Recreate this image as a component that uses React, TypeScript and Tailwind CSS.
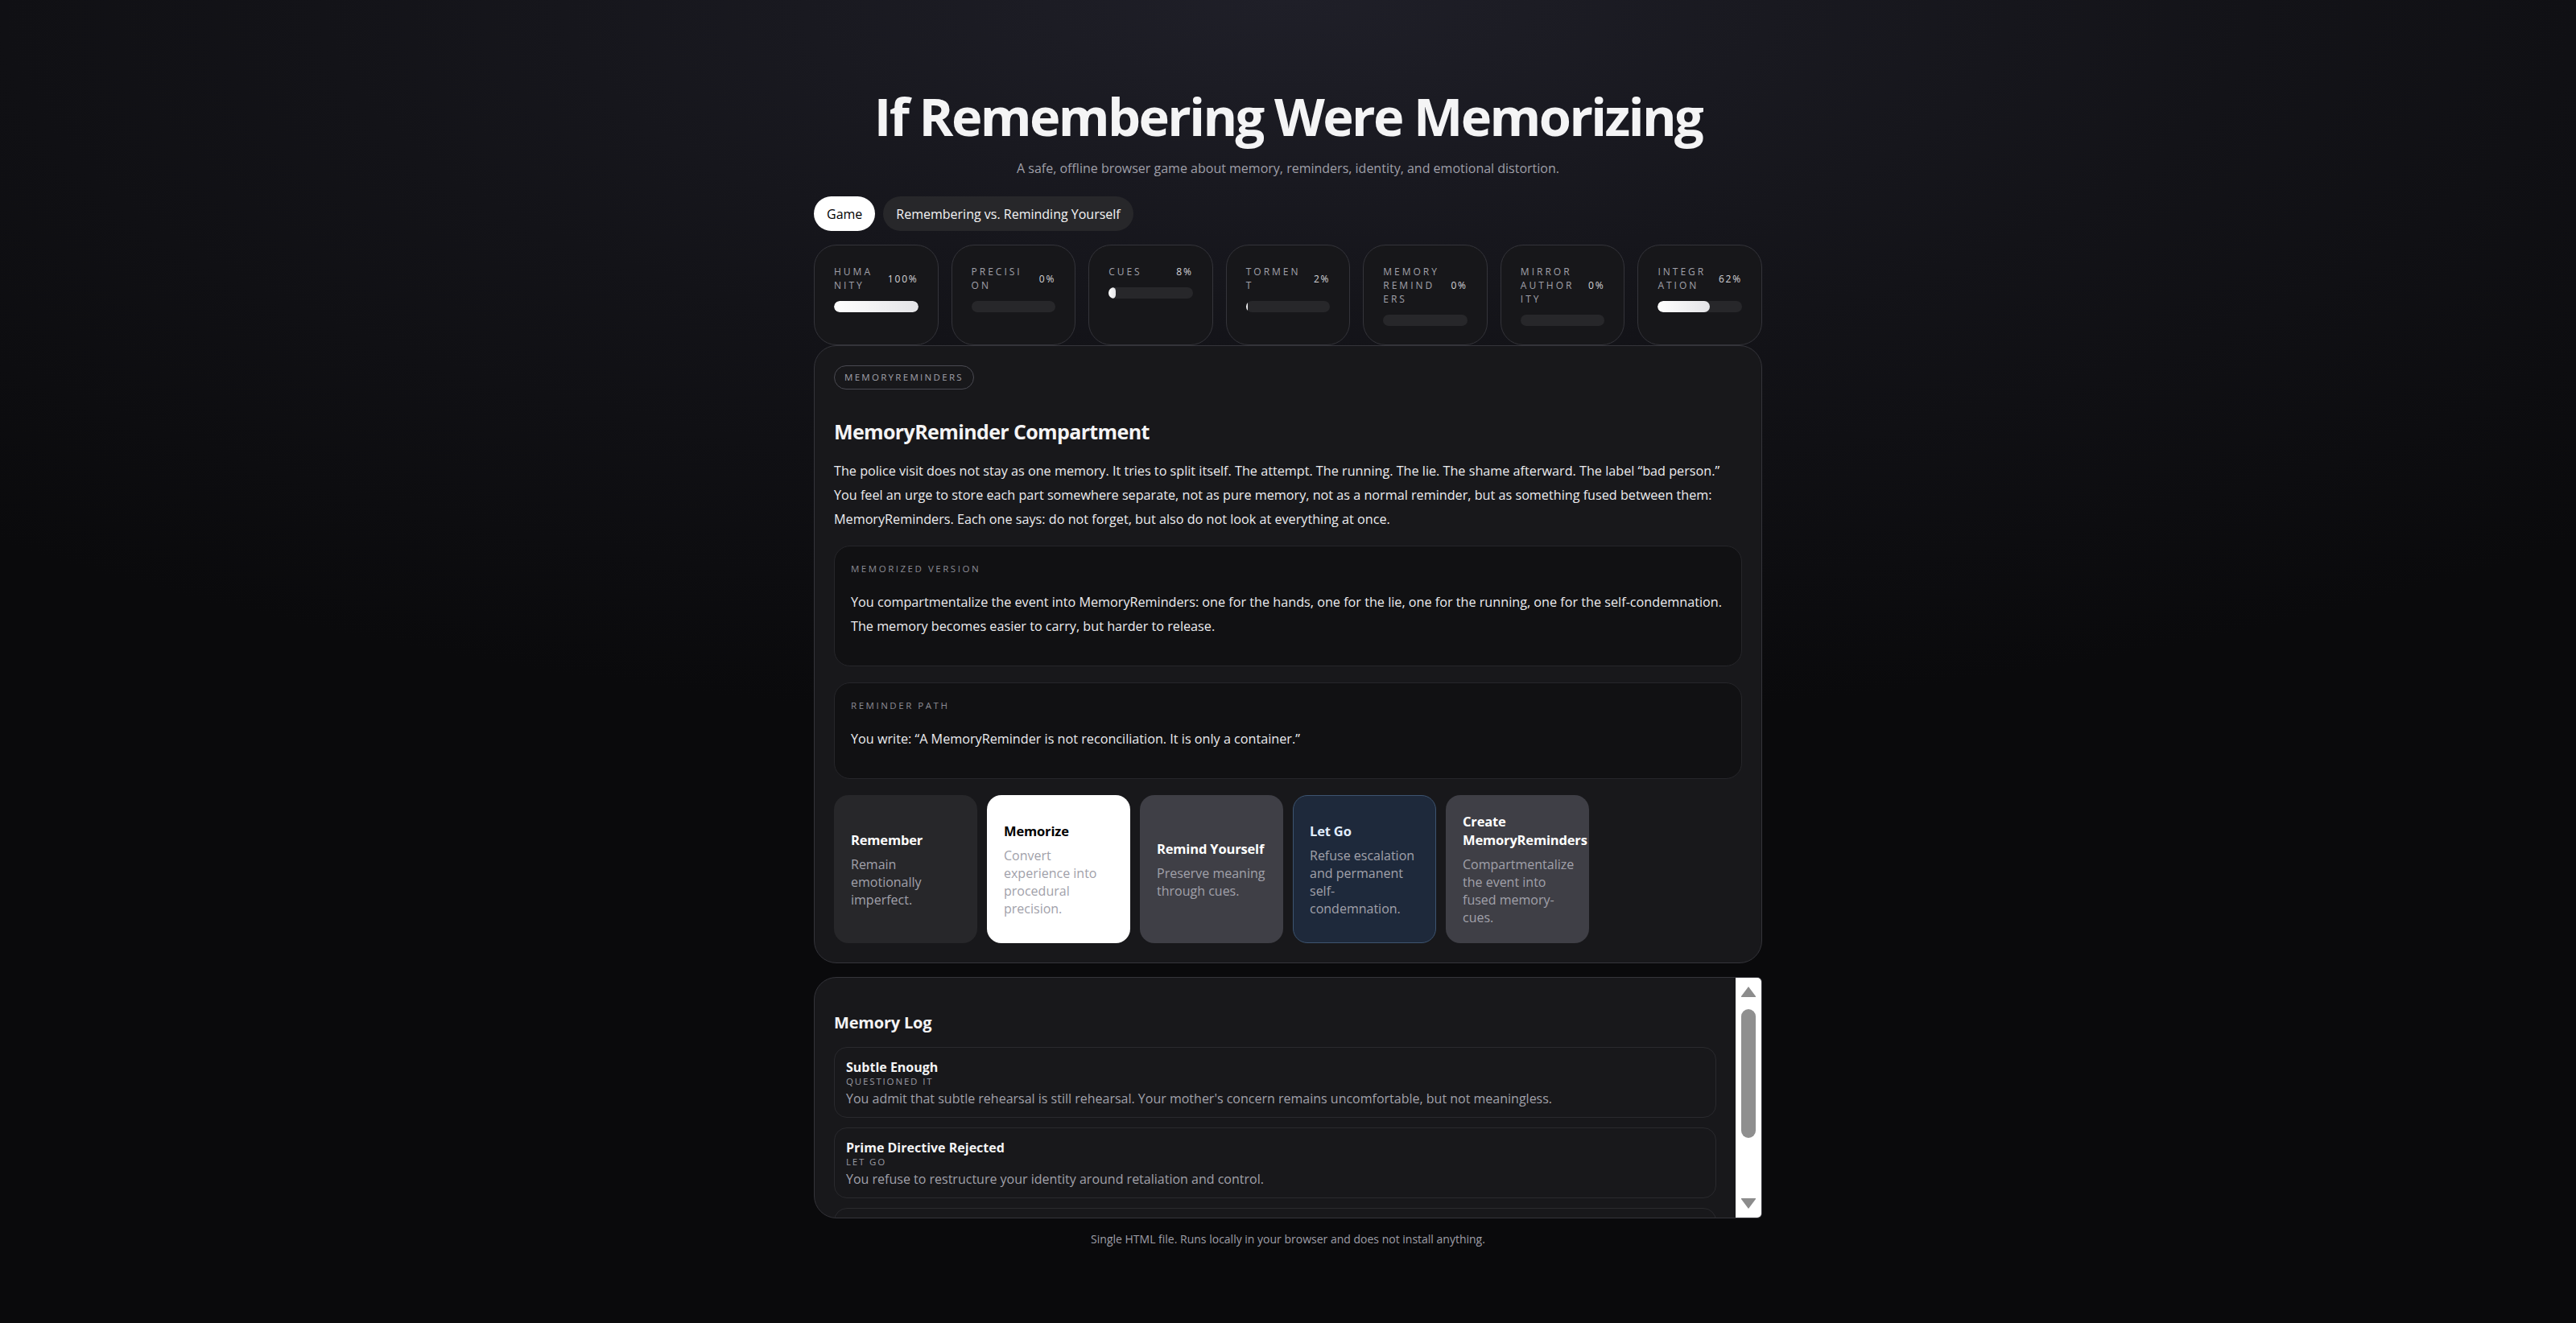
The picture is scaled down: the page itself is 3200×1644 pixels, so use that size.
import React from "react";

interface Stat {
  label: string;
  value: number;
}

const stats: Stat[] = [
  { label: "Humanity", value: 100 },
  { label: "Precision", value: 0 },
  { label: "Cues", value: 8 },
  { label: "Torment", value: 2 },
  { label: "Memory Reminders", value: 0 },
  { label: "Mirror Authority", value: 0 },
  { label: "Integration", value: 62 },
];

interface Choice {
  title: string;
  text: string;
  tone: "plain" | "active" | "muted" | "calm";
}

const choices: Choice[] = [
  { title: "Remember", text: "Remain emotionally imperfect.", tone: "plain" },
  { title: "Memorize", text: "Convert experience into procedural precision.", tone: "active" },
  { title: "Remind Yourself", text: "Preserve meaning through cues.", tone: "muted" },
  { title: "Let Go", text: "Refuse escalation and permanent self-condemnation.", tone: "calm" },
  {
    title: "Create MemoryReminders",
    text: "Compartmentalize the event into fused memory-cues.",
    tone: "muted",
  },
];

const log = [
  {
    title: "Subtle Enough",
    tag: "Questioned it",
    text: "You admit that subtle rehearsal is still rehearsal. Your mother's concern remains uncomfortable, but not meaningless.",
  },
  {
    title: "Prime Directive Rejected",
    tag: "Let go",
    text: "You refuse to restructure your identity around retaliation and control.",
  },
  {
    title: "The Police Visit",
    tag: "Remembered",
    text: "The memory arrives whole, and you let it stay imperfect.",
  },
];

const toneClass: Record<Choice["tone"], string> = {
  plain: "bg-[#27272a] border-transparent",
  active: "bg-white border-transparent",
  muted: "bg-[#3f3f46] border-transparent",
  calm: "bg-[#1e293b] border-[#3d5470]",
};

const titleClass: Record<Choice["tone"], string> = {
  plain: "text-white",
  active: "text-black",
  muted: "text-white",
  calm: "text-[#e0edff]",
};

const StatCard: React.FC<{ stat: Stat }> = ({ stat }) => (
  <div className="rounded-[28px] border border-[#34343a] bg-[#17171a] px-6 pt-6 pb-[23px]">
    <div className="flex items-center justify-between gap-3">
      <span className="min-w-0 break-all text-[12px] leading-[17px] tracking-[0.25em] text-[#a1a1aa] uppercase">
        {stat.label}
      </span>
      <span className="shrink-0 text-[12px] leading-[17px] tracking-[0.15em] text-[#d4d4d8]">
        {stat.value}%
      </span>
    </div>
    <div className="mt-[11px] h-[14px] w-full overflow-hidden rounded-full bg-[#27272a]">
      {stat.value > 0 && (
        <div
          className="h-full rounded-full bg-gradient-to-r from-white to-[#e4e4e7]"
          style={{ width: `${stat.value}%` }}
        />
      )}
    </div>
  </div>
);

const InfoBox: React.FC<{ label: string; children: React.ReactNode }> = ({ label, children }) => (
  <div className="rounded-[20px] border border-[#26262a] bg-[#111113] px-5 pt-5 pb-[18px]">
    <div className="text-[11.5px] leading-4 tracking-[0.22em] text-[#8b8b93] uppercase">{label}</div>
    <p className="mt-[18px] mb-4 text-[16.2px] leading-[30px] text-[#ececef]">{children}</p>
  </div>
);

export default function App() {
  return (
    <div
      className="min-h-screen w-full bg-[#0a0a0c] bg-[radial-gradient(ellipse_75%_55%_at_50%_0%,#1f1f28_0%,#131318_50%,#0a0a0c_100%)] pb-16 text-white"
      style={{ fontFamily: '"Open Sans", "Noto Sans", sans-serif' }}
    >
      <div className="mx-auto w-[1178px] pt-[110px]">
        <h1 className="text-center text-[65px] leading-[68px] font-bold tracking-[-0.04em] text-[#f4f4f5]">
          If Remembering Were Memorizing
        </h1>
        <p className="mt-[19px] text-center text-[16px] leading-6 text-[#9f9fa8]">
          A safe, offline browser game about memory, reminders, identity, and emotional distortion.
        </p>

        <div className="mt-[23px] flex gap-[10px]">
          <button className="h-[43px] rounded-full bg-white px-4 text-[16px] text-black">Game</button>
          <button className="h-[43px] rounded-full bg-[#27272a] px-4 text-[16px] text-[#f4f4f5]">
            Remembering vs. Reminding Yourself
          </button>
        </div>

        <div className="mt-[17px] grid grid-cols-7 gap-4">
          {stats.map((s) => (
            <StatCard key={s.label} stat={s} />
          ))}
        </div>

        <section className="rounded-[28px] border border-[#34343a] bg-[#18181b] p-6">
          <span className="inline-flex h-[30px] items-center rounded-full border border-[#4a4a52] px-3 text-[11.5px] tracking-[0.2em] text-[#a1a1aa] uppercase">
            MemoryReminders
          </span>
          <h2 className="mt-[35px] text-[25px] leading-[34px] font-bold tracking-[-0.025em] text-[#f4f4f5]">
            MemoryReminder Compartment
          </h2>
          <p className="mt-[18px] text-[16.2px] leading-[29.75px] text-[#ececef]">
            The police visit does not stay as one memory. It tries to split itself. The attempt. The running. The
            lie. The shame afterward. The label “bad person.” You feel an urge to store each part somewhere separate,
            not as pure memory, not as a normal reminder, but as something fused between them: MemoryReminders. Each
            one says: do not forget, but also do not look at everything at once.
          </p>

          <div className="mt-[18px] flex flex-col gap-5">
            <InfoBox label="Memorized version">
              You compartmentalize the event into MemoryReminders: one for the hands, one for the lie, one for the
              running, one for the self-condemnation. The memory becomes easier to carry, but harder to release.
            </InfoBox>
            <InfoBox label="Reminder path">
              You write: “A MemoryReminder is not reconciliation. It is only a container.”
            </InfoBox>
          </div>

          <div className="mt-5 grid grid-cols-6 gap-3">
            {choices.map((c) => (
              <button
                key={c.title}
                className={`flex min-h-[183px] flex-col justify-center rounded-[18px] border px-5 py-5 text-left ${toneClass[c.tone]}`}
              >
                <span className={`text-[16.5px] leading-[23px] font-bold tracking-[-0.01em] ${titleClass[c.tone]}`}>
                  {c.title}
                </span>
                <span className="mt-2 text-[16px] leading-[22px] text-[#a1a1aa]">{c.text}</span>
              </button>
            ))}
          </div>
        </section>

        <section className="mt-[17px] flex h-[300px] overflow-hidden rounded-l-[28px] rounded-r-[6px] border border-[#34343a] bg-[#18181b]">
          <div className="min-w-0 flex-1 overflow-hidden px-6 pt-[42px]">
            <h3 className="text-[20px] leading-7 font-bold tracking-[-0.01em] text-[#f4f4f5]">Memory Log</h3>
            <div className="mt-4 flex flex-col gap-3">
              {log.map((e) => (
                <div key={e.title} className="rounded-[16px] border border-[#2a2a2e] bg-[#18181b] px-[14px] pt-[14px] pb-3">
                  <div className="text-[16px] leading-5 font-bold text-[#f4f4f5]">{e.title}</div>
                  <div className="text-[11.5px] leading-4 tracking-[0.16em] text-[#9a9aa2] uppercase">{e.tag}</div>
                  <div className="mt-[2px] text-[16px] leading-[22px] text-[#a1a1aa]">{e.text}</div>
                </div>
              ))}
            </div>
          </div>
          <div className="flex w-[32px] shrink-0 flex-col items-center bg-white py-[10px]">
            <svg width="20" height="15" viewBox="0 0 20 15">
              <path d="M10 1 L19 13 Q19.5 14 18.5 14 L1.5 14 Q0.5 14 1 13 Z" fill="#8c8c8c" />
            </svg>
            <div className="mt-[14px] h-[160px] w-[18px] rounded-full bg-[#8f8f8f]" />
            <div className="flex-1" />
            <svg width="20" height="15" viewBox="0 0 20 15">
              <path d="M10 14 L19 2 Q19.5 1 18.5 1 L1.5 1 Q0.5 1 1 2 Z" fill="#8c8c8c" />
            </svg>
          </div>
        </section>

        <p className="mt-4 text-center text-[14px] leading-5 text-[#9f9fa8]">
          Single HTML file. Runs locally in your browser and does not install anything.
        </p>
      </div>
    </div>
  );
}
